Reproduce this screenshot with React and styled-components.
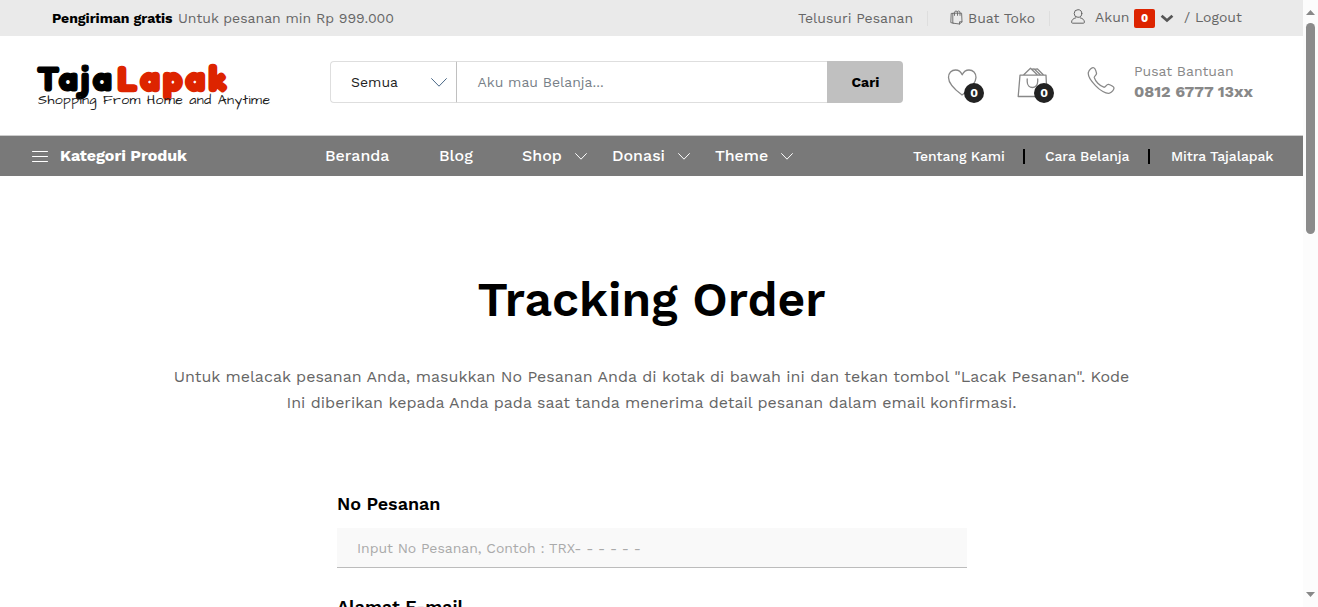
import React from "react";
import styled, { createGlobalStyle } from "styled-components";

const GlobalStyle = createGlobalStyle`
  * { box-sizing: border-box; }
  html, body { margin: 0; height: 100%; overflow: hidden; background: #fff; }
  body { font-family: "Work Sans", "Open Sans", "Liberation Sans", sans-serif; color: #666; }
  h1, p { margin: 0; }
`;

const Screen = styled.div`
  display: flex;
  width: 1318px;
  height: 607px;
  overflow: hidden;
`;
const Page = styled.div`
  width: 1303px;
  height: 607px;
  overflow: hidden;
`;

const Label = styled.span`
  flex: none;
  display: block;
  white-space: nowrap;
  width: ${(p) => p.$w}px;
  margin-left: ${(p) => p.$ml || 0}px;
  font-size: ${(p) => p.$size || 14}px;
  line-height: 20px;
`;

/* Top bar */
const TopBar = styled.div`
  display: flex;
  align-items: center;
  height: 36px;
  padding-left: 52px;
  background: #eaeaea;
`;
const Promo = styled(Label)`
  color: #000;
  font-weight: 700;
  letter-spacing: -0.04px;
`;
const TopText = styled(Label)`
  margin-bottom: ${(p) => (p.$raised ? 2 : 0)}px;
  color: #666;
`;
const Divider = styled.span`
  flex: none;
  width: 1px;
  height: 15px;
  margin-left: ${(p) => p.$ml}px;
  background: #dedede;
`;
const CountTag = styled.span`
  flex: none;
  width: 21px;
  height: 19px;
  margin-left: 4px;
  border-radius: 2px;
  background: #dd2400;
  color: #fff;
  font-size: 11px;
  font-weight: 800;
  line-height: 20px;
  text-align: center;
`;
const Icon = styled.svg`
  flex: none;
  display: block;
  margin-left: ${(p) => p.$ml || 0}px;
  margin-bottom: ${(p) => p.$mb || 0}px;
  fill: none;
  stroke: ${(p) => p.$color || "#666"};
  stroke-width: ${(p) => p.$stroke || 1};
  stroke-linecap: round;
  stroke-linejoin: round;
`;

/* Header */
const Header = styled.header`
  display: flex;
  align-items: flex-start;
  height: 100px;
  padding: 25px 0 0 37px;
  border-bottom: 1px solid #ccc;
`;
const Logo = styled.div`
  width: 293px;
  white-space: nowrap;
`;
const Brand = styled.div`
  display: flex;
  height: 32px;
  font-family: Fredoka, "Baloo 2", Lato, sans-serif;
  font-size: 35px;
  font-weight: 700;
  line-height: 34px;
`;
const BrandPart = styled.span`
  width: ${(p) => p.$w}px;
  letter-spacing: ${(p) => p.$ls}px;
  color: ${(p) => p.$color};
  -webkit-text-stroke: ${(p) => p.$stroke}px ${(p) => p.$color};
`;
const Tagline = styled.div`
  margin-left: 1px;
  font-family: "Architects Daughter", "Patrick Hand", "Caveat", Lato, sans-serif;
  font-size: 14px;
  letter-spacing: 0.4px;
  line-height: 14px;
  color: #222;
`;
const Search = styled.div`
  display: flex;
  width: 573px;
  height: 42px;
`;
const Category = styled.div`
  display: flex;
  align-items: center;
  width: 127px;
  border: 1px solid #dedede;
  border-right-color: #c0c0c0;
  border-radius: 4px 0 0 4px;
  color: #222;
`;
const Query = styled.div`
  display: flex;
  align-items: center;
  width: 370px;
  border: solid #dedede;
  border-width: 1px 0;
  color: #777f88;
`;
const SearchButton = styled.div`
  display: flex;
  align-items: center;
  width: 76px;
  border-radius: 0 4px 4px 0;
  background: #c0c0c0;
  color: #000;
  font-weight: 700;
`;
const HeaderAction = styled.div`
  position: relative;
  width: 40px;
  height: 42px;
  margin-left: ${(p) => p.$ml}px;
  padding-top: 6px;
`;
const Bubble = styled.span`
  position: absolute;
  left: 17px;
  top: 22px;
  width: 20px;
  height: 20px;
  border-radius: 50%;
  background: #222;
  color: #fff;
  font-size: 12px;
  font-weight: 700;
  line-height: 20px;
  text-align: center;
`;
const Help = styled.div`
  margin-left: 7px;
  color: #888;
`;
const Phone = styled(Label)`
  padding-top: 1px;
  font-weight: 700;
  letter-spacing: -0.04px;
`;

/* Navigation */
const Nav = styled.nav`
  display: flex;
  align-items: center;
  height: 40px;
  padding-left: 32px;
  background: #797979;
  color: #fff;
`;
const NavTitle = styled(Label)`
  font-weight: 700;
  letter-spacing: -0.06px;
`;
const NavLink = styled(Label)`
  font-weight: 500;
  letter-spacing: ${(p) => (p.$size ? 0 : -0.1)}px;
`;
const NavBar = styled.span`
  flex: none;
  width: 2px;
  height: 15px;
  margin-left: ${(p) => p.$ml}px;
  background: #000;
`;

/* Content */
const Title = styled.h1`
  margin-top: 92px;
  color: #000;
  font-size: 48px;
  font-weight: 600;
  line-height: 64px;
  text-align: center;
`;
const Intro = styled.p`
  width: 970px;
  margin: 32px auto 0;
  font-size: 16px;
  line-height: 26px;
  text-align: center;
`;
const Form = styled.form`
  width: 630px;
  margin: 78px 0 0 337px;
`;
const FieldName = styled.label`
  display: block;
  height: 34px;
  color: #000;
  font-size: 18px;
  font-weight: 600;
  letter-spacing: -0.04px;
  line-height: 20px;
`;
const Field = styled.div`
  height: 40px;
  margin-bottom: 29px;
  padding-left: 20px;
  border-bottom: 1px solid #bcbcbc;
  background: #f9f9f9;
  color: #aaa;
  font-size: 14px;
  letter-spacing: -0.02px;
  line-height: 40px;
  white-space: nowrap;
`;

/* Scrollbar */
const Track = styled.div`
  display: flex;
  flex-direction: column;
  align-items: center;
  width: 15px;
  height: 607px;
  padding: 10px 0;
  background: #fcfcfc;
`;
const Thumb = styled.div`
  width: 9px;
  height: 211px;
  margin: 8px 0 auto;
  border-radius: 5px;
  background: #8b8b8b;
`;
const Arrow = styled.svg`
  display: block;
  fill: #888;
`;

const Chevron = ({ w = 12, h = 7, ml, mb, color, stroke }) => (
  <Icon width={w} height={h} viewBox={`0 0 ${w} ${h}`} $ml={ml} $mb={mb} $color={color} $stroke={stroke}>
    <path d={`M.6 .6 L${w / 2} ${h - 0.8} L${w - 0.6} .6`} />
  </Icon>
);

export default function App() {
  return (
    <>
      <GlobalStyle />
      <Screen>
        <Page>
          <TopBar>
            <Promo $w={126}>Pengiriman gratis</Promo>
            <TopText $w={221}>Untuk pesanan min Rp 999.000</TopText>
            <TopText $w={128} $ml={399}>Telusuri Pesanan</TopText>
            <Divider $ml={1} />
            <Icon width="13" height="15" viewBox="0 0 13 15" $ml={22} $mb={2} $stroke={0.9}>
              <path d="M3 3.4H1.2L.8 12.6l2.4.6M3.2 3.2h8.4l.4 8.6-2.5 2.2-6.3-.8zM9.5 14v-2.2H12M4.5 5.4V2.8Q4.5 1 6 1T7.5 2.8v2.6M7.4 1.6Q8 1 8.6 1q1.4 0 1.4 1.8v2.6" />
            </Icon>
            <TopText $w={67} $ml={5}>Buat Toko</TopText>
            <Divider $ml={14} />
            <Icon width="14" height="15" viewBox="0 0 14 15" $ml={21} $mb={3}>
              <circle cx="7" cy="4.5" r="3.8" />
              <path d="M4.8 8.8C2 9.5.6 11 .6 13.2q0 1 1 1h10.8q1 0 1-1C13.4 11 12 9.5 9.2 8.8" />
            </Icon>
            <TopText $w={35} $ml={10} $raised>Akun</TopText>
            <CountTag>0</CountTag>
            <Icon width="14" height="9" viewBox="0 0 14 9" $ml={5} $color="#555" $stroke={2.8}>
              <path strokeLinecap="butt" strokeLinejoin="miter" d="M1.6 1.8L7 6.5L12.4 1.8" />
            </Icon>
            <TopText $w={70} $ml={10} $raised>/ Logout</TopText>
          </TopBar>

          <Header>
            <Logo>
              <Brand>
                <BrandPart $w={80} $ls={3.2} $stroke={1.2} $color="#000">Taja</BrandPart>
                <BrandPart $w={114} $ls={3.4} $stroke={2.4} $color="#dd2400">Lapak</BrandPart>
              </Brand>
              <Tagline>Shopping From Home and Anytime</Tagline>
            </Logo>
            <Search>
              <Category>
                <Label $w={80} $ml={20}>Semua</Label>
                <Chevron w={16} h={9} color="#357" stroke={0.9} />
              </Category>
              <Query>
                <Label $w={150} $ml={20.5}>Aku mau Belanja...</Label>
              </Query>
              <SearchButton>
                <Label $w={40} $ml={24.5}>Cari</Label>
              </SearchButton>
            </Search>
            <HeaderAction $ml={44}>
              <Icon width="31" height="30" viewBox="0 0 31 30" $color="#888" $stroke={1.3}>
                <path d="M15 28C11 25 1.5 18 1.5 10.5C1.5 6 4.5 3 8.5 3C12 3 14 5 15.2 7.8C16.5 5 18.5 3 22 3C26 3 29 6 29 10.5C29 18 19 25 15 28Z" />
              </Icon>
              <Bubble>0</Bubble>
            </HeaderAction>
            <HeaderAction $ml={30}>
              <Icon width="32" height="31" viewBox="0 0 32 31" $color="#888" $stroke={1.3}>
                <path d="M3 8.2H29L30 29.5H1.2ZM6.5 8L13.5 1.3L20.5 8M15 2.2L17 1.8L23.5 8M18.5 2.2L20.5 2L26.5 8M10.2 12V14.5C10.2 22.5 20.7 22.5 20.7 14.5V12" />
              </Icon>
              <Bubble>0</Bubble>
            </HeaderAction>
            <HeaderAction $ml={30}>
              <Icon width="28" height="28" viewBox="-.5 0 28 28" $color="#888" $stroke={1.3}>
                <path d="M1.2 4.5C2 2.5 4.5.7 5.7 .7C7 .7 8.5 4 9 6.2C9.4 8.2 6.4 9 6.8 10.7C7.8 14.3 12 18.7 16.3 20.2C18.2 20.8 18.8 17 21 17.4C23.5 18 26.5 20 26.5 21C26.5 22.5 24.5 25.5 22 26.2C18.5 27 12.5 23.5 8 18.6C4 14.5-.5 8.2 1.2 4.5Z" />
              </Icon>
            </HeaderAction>
            <Help>
              <Label $w={120}>Pusat Bantuan</Label>
              <Phone $w={130} $size={16}>0812 6777 13xx</Phone>
            </Help>
          </Header>

          <Nav>
            <Icon width="16" height="13" viewBox="0 0 16 13" $color="#fff">
              <path d="M.5 1.5h15M.5 6.5h15M.5 11.5h15" />
            </Icon>
            <NavTitle $w={253} $ml={12} $size={16}>Kategori Produk</NavTitle>
            <NavLink $w={114} $ml={12} $size={16}>Beranda</NavLink>
            <NavLink $w={83} $size={16}>Blog</NavLink>
            <NavLink $w={53} $size={16}>Shop</NavLink>
            <Chevron color="#fff" />
            <NavLink $w={66} $ml={25} $size={16}>Donasi</NavLink>
            <Chevron color="#fff" />
            <NavLink $w={66} $ml={25} $size={16}>Theme</NavLink>
            <Chevron color="#fff" />
            <NavLink $w={92} $ml={120}>Tentang Kami</NavLink>
            <NavBar $ml={18} />
            <NavLink $w={85} $ml={20}>Cara Belanja</NavLink>
            <NavBar $ml={18} />
            <NavLink $w={103} $ml={21}>Mitra Tajalapak</NavLink>
          </Nav>

          <Title>Tracking Order</Title>
          <Intro>
            Untuk melacak pesanan Anda, masukkan No Pesanan Anda di kotak di bawah ini dan tekan tombol "Lacak Pesanan". Kode
            Ini diberikan kepada Anda pada saat tanda menerima detail pesanan dalam email konfirmasi.
          </Intro>
          <Form>
            <FieldName>No Pesanan</FieldName>
            <Field>Input No Pesanan, Contoh : TRX- - - - - -</Field>
            <FieldName>Alamat E-mail</FieldName>
          </Form>
        </Page>
        <Track>
          <Arrow width="9" height="5" viewBox="0 0 9 5"><path d="M4.5 0L9 5H0Z" /></Arrow>
          <Thumb />
          <Arrow width="9" height="5" viewBox="0 0 9 5"><path d="M0 0H9L4.5 5Z" /></Arrow>
        </Track>
      </Screen>
    </>
  );
}
